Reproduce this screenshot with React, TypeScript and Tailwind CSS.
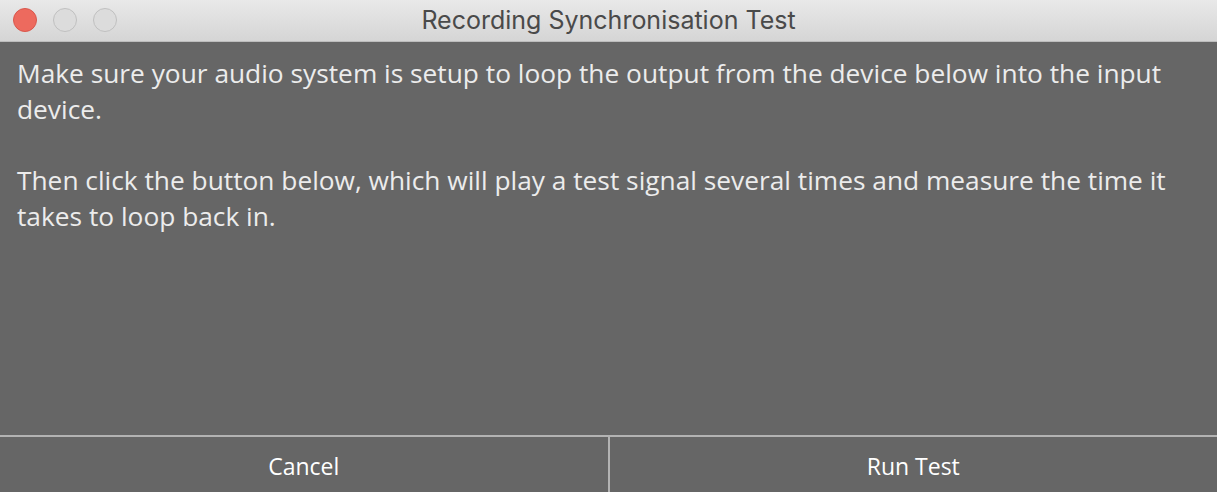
export default function App() {
  const lights = ["bg-[#ed6a5e] border-[#d9574c]", "bg-[#dcdcdc] border-[#c0c0c0]", "bg-[#dcdcdc] border-[#c0c0c0]"];

  return (
    <div className="w-[1217px] h-[492px] flex flex-col bg-[#666666] overflow-hidden">
      {/* title bar */}
      <div className="relative h-[42px] shrink-0 flex items-center justify-center bg-gradient-to-b from-[#e9e9e9] to-[#d5d5d5] border-b border-[#bdbdbd]">
        <div className="absolute left-[13px] top-[8px] flex gap-[16px]">
          {lights.map((c, i) => (
            <div key={i} className={`w-[24px] h-[24px] rounded-full border ${c}`} />
          ))}
        </div>
        <span className="text-[25px] text-[#4a4a4a] font-['Inter',sans-serif]">
          Recording Synchronisation Test
        </span>
      </div>

      {/* message */}
      <div className="flex-1 px-[17px] pt-[14px] text-[26.3px] leading-[35.5px] text-[#ececec] font-['Open_Sans',sans-serif]">
        <p>Make sure your audio system is setup to loop the output from the device below into the input device.</p>
        <p className="mt-[36px]">Then click the button below, which will play a test signal several times and measure the time it takes to loop back in.</p>
      </div>

      {/* buttons */}
      <div className="h-[57px] shrink-0 flex border-t-2 border-[#b3b3b3] text-[23px] text-white font-['Open_Sans',sans-serif]">
        <button className="flex-1 flex items-center justify-center pt-[3px] border-r-2 border-[#b3b3b3]">Cancel</button>
        <button className="flex-1 flex items-center justify-center pt-[3px]">Run Test</button>
      </div>
    </div>
  );
}
